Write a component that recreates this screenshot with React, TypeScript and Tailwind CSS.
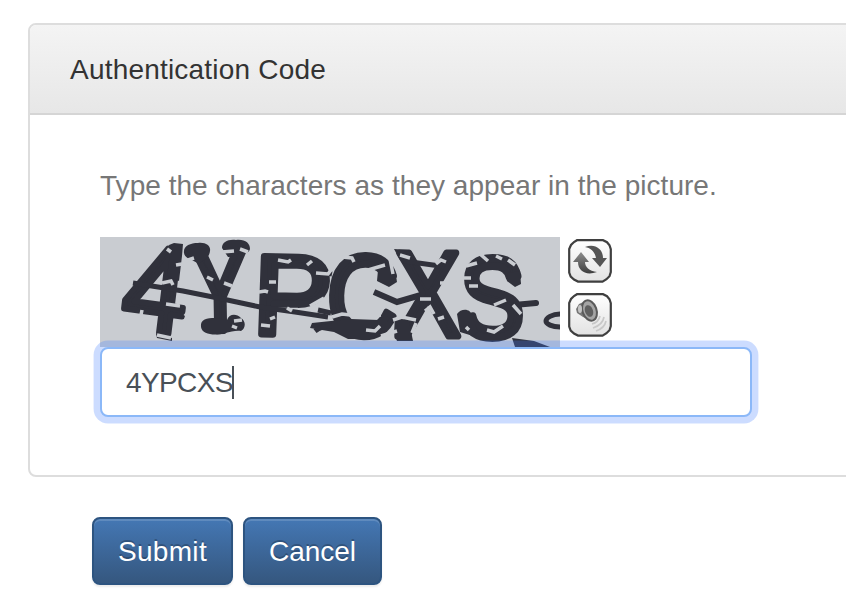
import { useState } from "react";

const INK = "#30313b";
const PAPER = "#c9ccd1";

interface GlyphProps {
  char: string;
  matrix: string;
  stroke?: number;
}

const Glyph = ({ char, matrix, stroke = 5 }: GlyphProps) => (
  <text
    transform={`matrix(${matrix})`}
    fontFamily="Liberation Sans, sans-serif"
    fontSize="100"
    fill={INK}
    stroke={INK}
    strokeWidth={stroke}
    strokeLinejoin="round"
  >
    {char}
  </text>
);

const CaptchaImage = () => (
  <svg width="460" height="110" viewBox="0 0 460 110" className="block shrink-0 overflow-visible">
    <rect width="460" height="110" fill={PAPER} />
    <Glyph char="4" matrix="1.15 .16 -.15 1.22 19 90" />
    <Glyph char="Y" matrix=".8 -.03 .02 1.16 94 94" stroke={7} />
    <Glyph char="P" matrix="1.18 .02 -.04 1.13 152 97" stroke={6} />
    <Glyph char="C" matrix=".98 .02 -.03 1.15 226 98" stroke={6} />
    <Glyph char="X" matrix=".98 0 0 1.2 295 99" stroke={6} />
    <Glyph char="S" matrix=".96 0 0 1.13 360 100" stroke={7} />
    {/* slabs on the letter ends */}
    <g fill={INK}>
      <path d="M69 8l5-2 9 1-1 12-3 25-12-5 3-22z" />
      <path d="M56 97l16 4v3l-15-3z" />
      <path d="M84 16c-1-7 6-10 14-10 8-1 13 3 12 8-1 8-7 9-11 13-7-5-14-5-15-11z" />
      <path d="M122 11c0-6 6-9 14-8 9-1 14 3 14 9-1 4-4 4-8 5-6-3-9 4-14 3z" />
      <path d="M101 90c-1-8 6-9 14-9l12 2c2-6 9-7 14-2 5 3 5 10 0 13-5-1-10 1-16 2-9 3-23 2-24-6z" />
      <path d="M278 33h17l2 12-8 5-12-6z" />
      <path d="M294 12l14 1 4 7-12 3z" />
      <path d="M231 84l20-2 28 1 8-4v13l-15 10h-24l-14-7-24-4 2-5z" />
      <path d="M295 80l14 4 4 20h-16l-3-8z" />
      <path d="M408 36l12-2 1 13-6 3-8-6z" />
      <path d="M357 77c4-6 14-6 15 2l6 16-5 4-13-4z" />
      <path d="M412 101l22 3 16 6h-35z" />
    </g>
    <g fill="none" stroke={INK} strokeWidth="5">
      <path d="M33 46l50 8 35 7 42 9 35 5 33 5" />
      <path d="M274 55l23 10 24-7" strokeWidth="6" />
      <path d="M304 24l36 5" />
      <path d="M414 68l22-2" strokeWidth="6" strokeLinecap="round" />
      <path d="M460 77c-8 0-14 4-14 7s6 6 14 6" />
      <path d="M215 94c5-4 10-5 17-5" />
      <path d="M218 34l14 3M218 73l13 3" />
    </g>
    <g fill="none" stroke={PAPER} strokeWidth="3.5">
      <path d="M71 15l-4-3M76 28l6-1M62 46l9-2 2 4M66 67l14 2M42 73l-1 5M57 98l14 3M85 79l4-5" />
      <path d="M85 24l9-3M107 40l6 3M122 15l12-1M140 12l8 3M124 46l8 3M134 84l8-1M137 91l-5-2" />
      <path d="M159 55l6-1 3 1M169 45h7M178 23l10 2 3-2M161 88l9 1M216 36l12 1 3-4M192 74l-5-3M207 28l5-4M210 69l14-8M170 82l5-2" />
      <path d="M242 20l10 1 2 4M232 80l10-3 17 2 22-1M266 93l9 1 5-5M285 28l-17 5M281 99l16-5M290 22l3 15M271 48l7 1" />
      <path d="M300 18l10 3M320 62h11M293 83l9-3 14 3M336 27l5-4 5 2M325 74l5-4 4 7M312 96l4-10M338 82l6-2M340 46h8" />
      <path d="M362 41h9M369 49h9M380 17l8 7M394 68l12-5M387 93l7 2 9-6M413 68l8 9M366 90l3 3M366 29l11-3M408 23l7 5M396 19l6 3" />
    </g>
  </svg>
);

const IconFrame = ({ label, children }: { label: string; children: React.ReactNode }) => (
  <button type="button" aria-label={label} className="block size-11">
    <svg width="44" height="44" viewBox="0 0 44 44" className="block">
      <defs>
        <linearGradient id={`face-${label}`} x1="0" y1="0" x2="0" y2="1">
          <stop offset="0" stopColor="#ffffff" />
          <stop offset="1" stopColor="#e2e2e2" />
        </linearGradient>
        <linearGradient id={`metal-${label}`} x1="0" y1="0" x2="0" y2="1">
          <stop offset="0" stopColor="#8e8e8e" />
          <stop offset="1" stopColor="#3e3e3e" />
        </linearGradient>
      </defs>
      <path
        d="M9 1.2h26l4 2 2.5 3 1.3 4v23l-1.3 4-3 3-4 2.4H10l-4-2-3.3-3-1.5-4V10L3 6l3-3z"
        fill={`url(#face-${label})`}
        stroke="#3f3f3f"
        strokeWidth="2.2"
      />
      {children}
    </svg>
  </button>
);

const ReloadIcon = () => (
  <IconFrame label="reload">
    <path d="M17 8c10-4 18 2 18 11h4l-7 9-8-9h4c-1-6-5-10-11-11z" fill="#555555" />
    <path d="M5 23l8-10 8 10h-4c0 5 4 9 12 10-11 4-19-1-19-10z" fill="url(#metal-reload)" />
  </IconFrame>
);

const SoundIcon = () => (
  <IconFrame label="sound">
    <path d="M8 16l3-5 9-4 5 21-10-4-6-4z" fill="#777777" />
    <ellipse cx="21.5" cy="17.5" rx="7" ry="10.5" transform="rotate(-20 21.5 17.5)" fill="#a5a5a5" stroke="#5a5a5a" strokeWidth="2" />
    <ellipse cx="21" cy="18" rx="4" ry="6" transform="rotate(-20 21 18)" fill="#5f5f5f" />
    <ellipse cx="12" cy="16" rx="2" ry="4" fill="#c5c5c5" />
    <path d="M24 31c4-1 7-4 8-8M25 35c6-2 10-5 11-11M28 38c6-2 9-5 10-10" fill="none" stroke="#c8c8c8" strokeWidth="1.7" />
  </IconFrame>
);

const ActionButton = ({ label, className }: { label: string; className: string }) => (
  <button
    type="button"
    className={`h-[68px] rounded-lg border-2 border-[#2d5480] bg-linear-to-b from-[#4477b4] to-[#35577f] pt-0.5 text-[28px] leading-8 text-white shadow-[inset_0_2px_0_rgba(255,255,255,0.15),0_2px_2px_rgba(0,0,0,0.08)] [text-shadow:0_-2px_0_rgba(0,0,0,0.22)] ${className}`}
  >
    {label}
  </button>
);

export default function App() {
  const [code, setCode] = useState("4YPCXS");

  return (
    <div className="h-[608px] w-[846px] overflow-hidden bg-white pt-[23px] font-['Liberation_Sans',sans-serif]">
      <section className="ml-7 h-[454px] w-[900px] rounded-lg border-2 border-[#dddddd]">
        <h1 className="flex h-[90px] items-center rounded-t-md border-b-2 border-[#d5d5d5] bg-linear-to-b from-[#f4f4f4] to-[#e7e7e7] pt-0.5 pl-10 text-[28px] tracking-[0.2px] text-[#333333]">
          Authentication Code
        </h1>
        <div className="pt-[51px] pl-[70px]">
          <p className="h-[71px] text-[28px] leading-10 tracking-[0.04px] text-[#777777]">
            Type the characters as they appear in the picture.
          </p>
          <div className="flex gap-2">
            <CaptchaImage />
            <div className="flex flex-col gap-2.5 pt-0.5">
              <ReloadIcon />
              <SoundIcon />
            </div>
          </div>
          <label className="relative flex h-[70px] w-[652px] items-center rounded-lg border-2 border-[#8bb8f8] bg-white pl-6 shadow-[0_0_0_6.4px_rgba(66,124,255,0.27)]">
            <input
              value={code}
              onChange={(e) => setCode(e.target.value)}
              aria-label="Authentication Code"
              className="w-[106px] bg-transparent pt-0.5 text-[28px] tracking-[-0.6px] text-[#495057] outline-none"
            />
            <span className="h-[33px] w-0.5 bg-[#495057]" />
          </label>
        </div>
      </section>
      <div className="mt-10 ml-[92px] flex gap-2.5">
        <ActionButton label="Submit" className="w-[141px] tracking-[0.3px]" />
        <ActionButton label="Cancel" className="w-[139px]" />
      </div>
    </div>
  );
}
